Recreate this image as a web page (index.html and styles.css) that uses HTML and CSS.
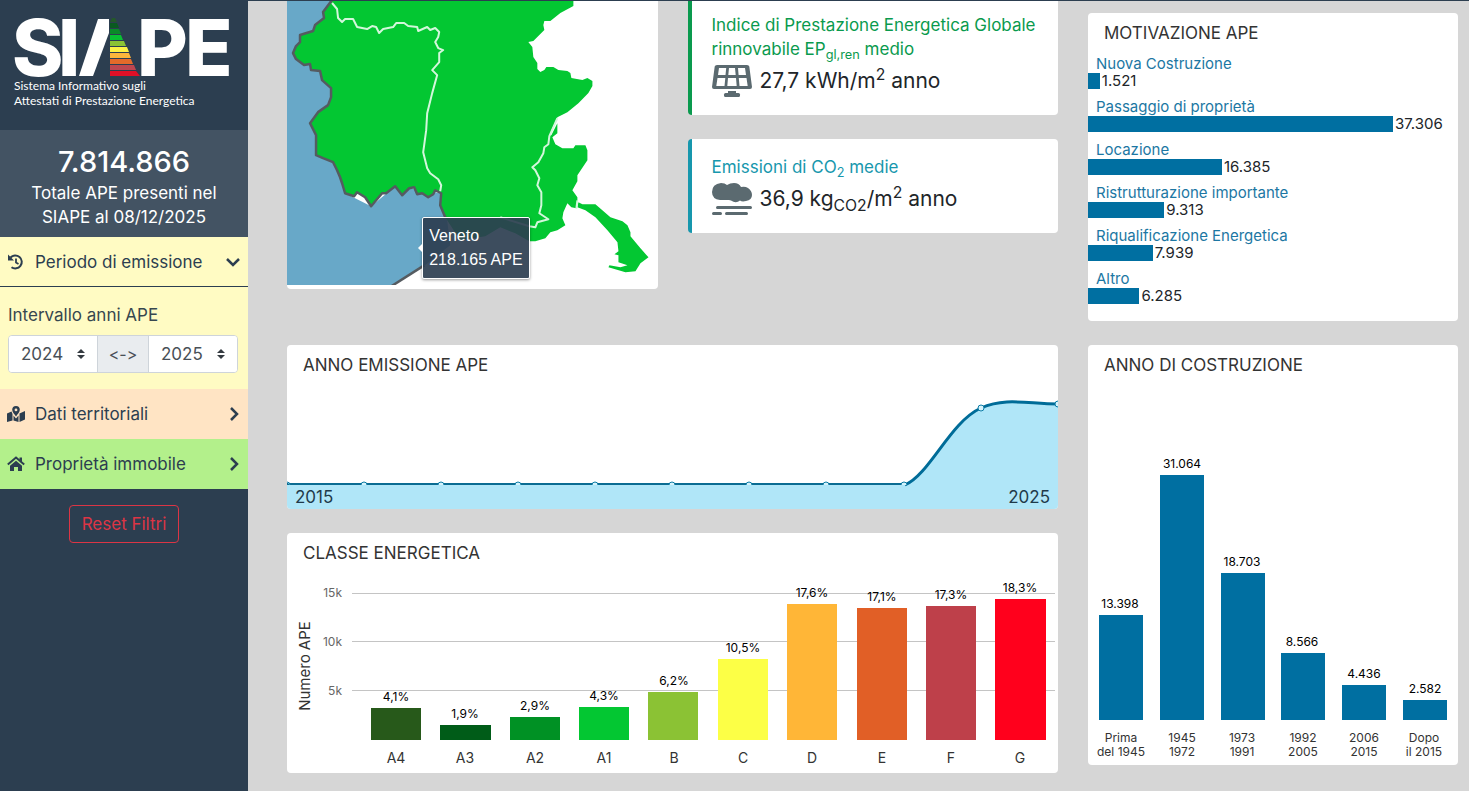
FILE: index.html
```html
<!DOCTYPE html>
<html lang="it">
<head>
<meta charset="utf-8">
<meta name="viewport" content="width=device-width, initial-scale=1">
<title>SIAPE</title>
<link rel="stylesheet" href="styles.css">
</head>
<body>
<div class="app">
  <aside class="sidebar">
    <header class="brand">
      <svg class="brand-logo" viewBox="14 16 220 62" role="img" aria-label="SIAPE">
        <g class="logo-text">
          <text x="12" y="76">S</text><text x="58" y="76">I</text>
          <text x="137" y="76">P</text><text x="185" y="76">E</text>
        </g>
        <path fill="#fff" d="M79 76 98 19h11v14L93 76z"/>
        <path fill="#24582a" d="M110 22l2-4h3l2 4z"/>
        <path fill="#0a5a20" d="M110 23h7l2 5h-9z"/>
        <path fill="#0a8a28" d="M110 29h9l2 5h-11z"/>
        <path fill="#08c032" d="M110 35h11l2 5h-13z"/>
        <path fill="#8bc234" d="M110 41h14l2 5h-16z"/>
        <path fill="#fbf046" d="M110 47h17l2 5h-19z"/>
        <path fill="#fbb63c" d="M110 53h19l2 5h-21z"/>
        <path fill="#e36a2a" d="M110 59h21l2 5h-23z"/>
        <path fill="#bd4650" d="M110 65h24l2 5h-26z"/>
        <path fill="#df1027" d="M110 71h26l4 5h-30z"/>
      </svg>
      <p class="brand-sub">Sistema Informativo sugli<br>Attestati di Prestazione Energetica</p>
    </header>
    <section class="total">
      <strong class="total-number">7.814.866</strong>
      <p class="total-text">Totale APE presenti nel<br>SIAPE al 08/12/2025</p>
    </section>
    <button class="filter filter-period" type="button" aria-expanded="true">
      <svg class="filter-icon" viewBox="0 0 18 18" fill="none" stroke="currentColor" stroke-width="2"><path d="M3.500 4.500A6.500 6.500 0 1 1 4.500 14.200"/><path d="M9 5.500v4l2.500 1.500" stroke-width="1.800"/><path d="M1 1.500v6h6z" fill="currentColor" stroke="none"/></svg>
      <span class="filter-label">Periodo di emissione</span>
      <svg class="chevron" viewBox="0 0 16 16"><path d="M2 5l6 6 6-6"/></svg>
    </button>
    <div class="period-body">
      <label class="period-label" for="year-from">Intervallo anni APE</label>
      <div class="range">
        <div class="select-box">
          <select id="year-from"><option>2024</option></select>
          <svg class="arrows" viewBox="0 0 8 10"><path d="M4 0l4 4H0zM4 10L0 6h8z"/></svg>
        </div>
        <span class="range-sep">&lt;-&gt;</span>
        <div class="select-box">
          <select aria-label="Anno finale"><option>2025</option></select>
          <svg class="arrows" viewBox="0 0 8 10"><path d="M4 0l4 4H0zM4 10L0 6h8z"/></svg>
        </div>
      </div>
    </div>
    <button class="filter filter-territory" type="button">
      <svg class="filter-icon" viewBox="0 0 18 18" fill="currentColor"><path fill-rule="evenodd" d="M9 1a3.800 3.800 0 0 1 3.800 3.800C12.800 7 10.500 9.500 9 11.500 7.500 9.500 5.200 7 5.200 4.800A3.800 3.800 0 0 1 9 1zm0 2.500a1.400 1.400 0 1 0 0 2.800 1.400 1.400 0 0 0 0-2.800z"/><path d="M0 8.500l4.500-2L5.500 9v6.500L0 17zM6.500 10.500L9 13.500l2.500-3v6.500l-5-1.500zM12.500 8.500L18 6v8.500L12.500 17z"/></svg>
      <span class="filter-label">Dati territoriali</span>
      <svg class="chevron" viewBox="0 0 16 16"><path d="M6 2l6 6-6 6"/></svg>
    </button>
    <button class="filter filter-building" type="button">
      <svg class="filter-icon" viewBox="0 0 18 18" fill="none" stroke="currentColor"><path stroke-width="2" d="M.8 9.500 9 2.500l8.200 7"/><path fill="currentColor" stroke="none" d="M12.500 2.500H15V7l-2.500-2zM9 5.800l6 5V16h-4v-4H7v4H3v-5.200z"/></svg>
      <span class="filter-label">Proprietà immobile</span>
      <svg class="chevron" viewBox="0 0 16 16"><path d="M6 2l6 6-6 6"/></svg>
    </button>
    <button class="reset" type="button">Reset Filtri</button>
  </aside>

  <main class="main">
    <div class="wide-column">
      <div class="top-row">
        <section class="card map-card" aria-label="Mappa delle regioni">
          <svg class="fluid" viewBox="287 1 370 284">
            <path fill="#68a8c8" d="M287 0H332L323 12 324 18 315 25 313 31 300 35V42L296 46 293 53 296 59 304 65 310 64 311 70 320 71 322 80 331 88V97L328 105 318 112 310 123 316 135V155L333 162 342 183 345 193 371 206 395 186 441 193 440 205 447 220 450 245 422 267 392 286H287z"/>
            <path fill="#03c732" d="M332 0 323 12 324 18 315 25 313 31 300 35V42L296 46 293 53 296 59 304 65 310 64 311 70 320 71 322 80 331 88V97L328 105 318 112 310 123 316 135V155L323 158 333 162 337 170 340 177 342 183 345 193 354 196 357 192 365 197 371 206 382 193 386 193 395 186 402 195 409 188 414 187 417 194 422 193 428 197 433 194 435 190 441 193 440 205 445 217 460 240 485 236 500 227 515 233 529 241 535 241 545 238 550 232 557 230 565 225 562 218 563 212 567 203 571 207 576 208 577 202V197L572 190 577 181V175L587 160V150L585 145 575 145 573 148 562 148 555 144 552 137 557 133V123L551 135 549 135 552 128 557 117 567 112 578 103 588 93 592 86V81L587 78 582 80 571 78 570 73 567 71 558 70 553 67H546L544 70 540 72 537 69V63L533 57 532 47 528 42 533 41 544 30 543 25 544 21H550L560 13 573 6V0z"/>
            <path fill="#03c732" d="M578 202 582 204 595 204 610 217 622 221 627 225 630 232V236L640 248 648 257 640 263 635 271 625 272 608 267 609 265 620 267 627 265 618 262V255L614 254 618 251 617 242 607 230 595 217 585 210 577 207z"/>
            <g fill="none" stroke="#555b60" stroke-width="2.500" stroke-linejoin="round">
              <path d="M332 0 323 12 324 18 315 25 313 31 300 35V42L296 46 293 53 296 59 304 65 310 64 311 70 320 71 322 80 331 88V97L328 105 318 112 310 123 316 135V155L323 158 333 162 337 170 340 177 342 183 345 193 354 196 357 192 365 197 371 206 382 193 386 193 395 186 402 195 409 188 414 187 417 194 422 193 428 197 433 194 435 190 441 193 440 205 445 217"/>
              <path d="M424 265 391 286"/>
            </g>
            <g fill="none" stroke="#d3f7db" stroke-width="2" stroke-linejoin="round">
              <path d="M332 3 337 9 338 18 342 22 345 19H353L357 27 367 29 372 26 376 27 379 33 383 29 393 27 396 23H404L408 26 417 27 418 31 427 27 430 30 435 28 439 32 438 37 435 42 438 48 443 50 439 53V62L432 70 437 75 432 93 427 113 426 130 424 145 423 152 427 168 430 173 438 179 441 185 440 191"/>
              <path d="M557 118 549 136 548 144 544 147 543 153 538 162 532 167 535 170 539 178 537 185 541 192V205L539 213 548 219 537 222 535 227 529 226 500 217"/>
              <path d="M577 200 576 208"/>
            </g>
          </svg>
          <div class="map-tip" role="tooltip">Veneto<br>218.165 APE</div>
        </section>
        <div class="stats">
          <section class="card stat stat-green stat-first">
            <h2 class="stat-title">Indice di Prestazione Energetica Globale rinnovabile EP<sub>gl,ren</sub> medio</h2>
            <p class="stat-value">
              <svg class="stat-icon" viewBox="0 0 40 32" fill="#5b6a70"><path fill-rule="evenodd" d="M5 0h30q2 0 2.300 1.500L40 22q0 2-2 2H2q-2 0-2-2L2.700 1.500Q3 0 5 0zM7 3l-1 7h7.500l.7-7zM17 3l-.7 7h7.400L23 3zM26 3l.6 7H34l-1-7zM5.500 13l-1.200 8h8.200l.8-8zM16 13l-.7 8h9.400l-.7-8zM26.800 13l.7 8h8.200l-1.200-8z"/><rect x="16" y="26" width="8" height="4"/><rect x="12" y="28" width="16" height="4" rx="1.500"/></svg>
              <span>27,7 kWh/m<sup>2</sup> anno</span>
            </p>
          </section>
          <section class="card stat stat-teal">
            <h2 class="stat-title">Emissioni di CO<sub>2</sub> medie</h2>
            <p class="stat-value">
              <svg class="stat-icon" viewBox="0 0 40 32" fill="#5b6a70"><path d="M9 0q4 0 6 2 3-2 7-2 5 0 7 4 4-1 7 1 4 3 4 7 0 5-6 6-4 1-6-.5-4 3.500-9 0l-2-.5H8q-8-1-8-8Q0 1 9 0z"/><g stroke="#5b6a70" stroke-width="3" stroke-linecap="round"><path d="M5.500 24.500h33M1.500 30.500h7M14.500 30.500h20"/></g></svg>
              <span>36,9 kg<sub>CO2</sub>/m<sup>2</sup> anno</span>
            </p>
          </section>
        </div>
      </div>

      <section class="card">
        <h2 class="card-title">ANNO EMISSIONE APE</h2>
        <svg class="fluid" viewBox="287 385 771 124" role="img" aria-label="Anno emissione APE">
          <path fill="#b0e6f8" d="M287 485H904C930 474 950 422 981 408 1006 397 1028 404 1058 404V509H287z"/>
          <path fill="none" stroke="#0b6c92" stroke-width="2" d="M287 484H906"/>
          <path fill="none" stroke="#006c98" stroke-width="3" d="M905 485C930 474 950 422 981 408 1006 397 1028 404 1058 404"/>
          <g fill="#d5f2fb" stroke="#0b7ca6" stroke-width="1">
            <path d="M287 482a3 3 0 0 1 3 3M361 485a3 3 0 0 1 6 0M438 485a3 3 0 0 1 6 0M515 485a3 3 0 0 1 6 0M592 485a3 3 0 0 1 6 0M669 485a3 3 0 0 1 6 0M746 485a3 3 0 0 1 6 0M823 485a3 3 0 0 1 6 0M901 485a3 3 0 0 1 6 0"/>
            <circle cx="981" cy="408" r="3"/><circle cx="1058" cy="404" r="3"/>
          </g>
          <g class="year-text"><text x="295" y="503">2015</text><text x="1050" y="503" text-anchor="end">2025</text></g>
        </svg>
      </section>

      <section class="card">
        <h2 class="card-title">CLASSE ENERGETICA</h2>
        <svg class="fluid" viewBox="287 573 771 200" role="img" aria-label="Classe energetica">
          <path stroke="#c4c4c4" d="M352 593.500H1055M352 641.500H1055M352 690.500H1055"/>
          <g class="tick" text-anchor="end"><text x="342" y="597">15k</text><text x="342" y="646">10k</text><text x="342" y="695">5k</text></g>
          <text class="axis-name" text-anchor="middle" transform="translate(310 666) rotate(-90)">Numero APE</text>
          <rect x="371" y="708" width="50" height="32" fill="#27591a"/>
          <rect x="440" y="725" width="51" height="15" fill="#005c18"/>
          <rect x="510" y="717" width="50" height="23" fill="#009124"/>
          <rect x="579" y="707" width="50" height="33" fill="#03c732"/>
          <rect x="648" y="692" width="50" height="48" fill="#8bc234"/>
          <rect x="718" y="659" width="50" height="81" fill="#fcff46"/>
          <rect x="787" y="604" width="50" height="136" fill="#ffb637"/>
          <rect x="857" y="608" width="50" height="132" fill="#e15f26"/>
          <rect x="926" y="606" width="50" height="134" fill="#be404a"/>
          <rect x="995" y="599" width="51" height="141" fill="#ff001c"/>
          <g class="value" text-anchor="middle">
            <text x="396" y="701">4,1%</text><text x="465" y="718">1,9%</text><text x="535" y="710">2,9%</text><text x="604" y="700">4,3%</text><text x="674" y="685">6,2%</text><text x="743" y="652">10,5%</text><text x="812" y="597">17,6%</text><text x="882" y="601">17,1%</text><text x="951" y="599">17,3%</text><text x="1020" y="592">18,3%</text>
          </g>
          <g class="class-name" text-anchor="middle">
            <text x="396" y="763">A4</text><text x="465" y="763">A3</text><text x="535" y="763">A2</text><text x="604" y="763">A1</text><text x="674" y="763">B</text><text x="743" y="763">C</text><text x="812" y="763">D</text><text x="882" y="763">E</text><text x="951" y="763">F</text><text x="1020" y="763">G</text>
          </g>
        </svg>
      </section>
    </div>

    <div class="side-column">
      <section class="card reasons">
        <h2 class="card-title">MOTIVAZIONE APE</h2>
        <dl class="bars">
          <div class="bar-item"><dt>Nuova Costruzione</dt><dd><span class="bar" style="width:3.200%"></span>1.521</dd></div>
          <div class="bar-item"><dt>Passaggio di proprietà</dt><dd><span class="bar" style="width:82.400%"></span>37.306</dd></div>
          <div class="bar-item"><dt>Locazione</dt><dd><span class="bar" style="width:36.200%"></span>16.385</dd></div>
          <div class="bar-item"><dt>Ristrutturazione importante</dt><dd><span class="bar" style="width:20.600%"></span>9.313</dd></div>
          <div class="bar-item"><dt>Riqualificazione Energetica</dt><dd><span class="bar" style="width:17.500%"></span>7.939</dd></div>
          <div class="bar-item"><dt>Altro</dt><dd><span class="bar" style="width:13.900%"></span>6.285</dd></div>
        </dl>
      </section>
      <section class="card">
        <h2 class="card-title">ANNO DI COSTRUZIONE</h2>
        <svg class="fluid" viewBox="1088 385 370 380" role="img" aria-label="Anno di costruzione">
          <g fill="#006fa1">
            <rect x="1099" y="615" width="44" height="105"/><rect x="1160" y="475" width="44" height="245"/><rect x="1221" y="573" width="44" height="147"/><rect x="1281" y="653" width="44" height="67"/><rect x="1342" y="685" width="44" height="35"/><rect x="1403" y="700" width="44" height="20"/>
          </g>
          <g class="value" text-anchor="middle">
            <text x="1120" y="608">13.398</text><text x="1182" y="468">31.064</text><text x="1242" y="566">18.703</text><text x="1302" y="646">8.566</text><text x="1364" y="678">4.436</text><text x="1425" y="693">2.582</text>
          </g>
          <g class="period-name" text-anchor="middle">
            <text x="1121" y="742">Prima</text><text x="1121" y="756">del 1945</text>
            <text x="1182" y="742">1945</text><text x="1182" y="756">1972</text>
            <text x="1242" y="742">1973</text><text x="1242" y="756">1991</text>
            <text x="1303" y="742">1992</text><text x="1303" y="756">2005</text>
            <text x="1364" y="742">2006</text><text x="1364" y="756">2015</text>
            <text x="1424" y="742">Dopo</text><text x="1424" y="756">il 2015</text>
          </g>
        </svg>
      </section>
    </div>
  </main>
</div>
</body>
</html>
```

FILE: styles.css
```css
*, *::before { box-sizing: border-box; }
body {
  margin: 0;
  background: #d6d6d6;
  color: #212529;
  font-family: Inter, "Open Sans", sans-serif;
  font-size: 17px;
  line-height: 24px;
}
h2, p, dl, dd { margin: 0; font-weight: 400; }
button, select { font: inherit; }
sub, sup { font-size: 75%; line-height: 0; }
.fluid { display: block; width: 100%; }

.app { display: flex; min-height: 100vh; border-top: 1px solid #2c3e50; }

/* Sidebar */
.sidebar {
  flex: none;
  width: 248px;
  display: flex;
  flex-direction: column;
  background: #2c3e50;
  color: #fff;
}
.brand { padding: 15px 14px 22px; }
.brand-logo { display: block; width: 220px; overflow: visible; }
.logo-text { fill: #fff; font-size: 78px; font-weight: 800; }
.brand-sub { font-family: Lato, sans-serif; font-size: 12px; line-height: 15px; }
.total { padding: 12px 8px 8px; background: #435363; text-align: center; }
.total-number { display: block; font-size: 29px; font-weight: 500; line-height: 39px; }
.filter {
  display: flex;
  align-items: center;
  gap: 10px;
  height: 50px;
  padding: 0 7px;
  border: 0;
  color: #2c3e50;
  text-align: left;
}
.filter-period { background: #fffbc3; border-bottom: 1px solid #2c3e50; }
.filter-territory { background: #ffe4c4; }
.filter-building { background: #b3f08b; }
.filter-icon { flex: none; width: 18px; height: 18px; }
.filter-label { flex: 1; }
.chevron { width: 16px; height: 16px; fill: none; stroke: currentColor; stroke-width: 2.5; }
.period-body { padding: 16px 10px 16px 8px; background: #fffbc3; color: #37474f; }
.period-label { display: block; margin-bottom: 8px; }
.range {
  display: flex;
  height: 38px;
  border: 1px solid #ced4da;
  border-radius: 4px;
  background: #fff;
  overflow: hidden;
}
.select-box { position: relative; flex: 1; display: flex; }
.select-box select {
  flex: 1;
  width: 100%;
  padding: 0 12px;
  border: 0;
  background: #fff;
  color: #495057;
  appearance: none;
}
.arrows { position: absolute; right: 12px; top: 13px; width: 8px; height: 10px; fill: #343a40; pointer-events: none; }
.range-sep {
  flex: none;
  width: 52px;
  border: solid #ced4da;
  border-width: 0 1px;
  background: #e9ecef;
  color: #495057;
  font-size: 16px;
  font-feature-settings: "calt" 0;
  line-height: 36px;
  text-align: center;
}
.reset {
  align-self: center;
  height: 38px;
  margin-top: 16px;
  padding: 0 12px;
  border: 1px solid #dc3545;
  border-radius: 4px;
  background: none;
  color: #dc3545;
}

/* Dashboard */
.main {
  flex: 1;
  display: grid;
  grid-template-columns: minmax(0, 771fr) minmax(0, 370fr);
  column-gap: 30px;
  align-items: start;
  padding: 0 11px 0 39px;
}
.wide-column, .side-column, .stats { display: flex; flex-direction: column; gap: 24px; }
.side-column { padding-top: 12px; }
.top-row {
  display: grid;
  grid-template-columns: 1fr 1fr;
  gap: 30px;
  align-items: start;
  margin-bottom: 32px;
}
.card { border-radius: 4px; background: #fff; overflow: hidden; }
.card-title { padding: 8px 16px; font-size: 17px; line-height: 24px; color: #333; }
.map-card { position: relative; padding-bottom: 4px; border-radius: 0 0 4px 4px; }
.map-tip {
  position: absolute;
  left: 36.5%;
  top: 75%;
  padding: 6px;
  border: 1px solid #fff;
  border-radius: 2px;
  background: rgba(44, 62, 80, 0.92);
  box-shadow: 0 1px 3px rgba(0, 0, 0, 0.4);
  color: #fff;
  font-family: "Liberation Sans", sans-serif;
  font-size: 16px;
  white-space: nowrap;
}
.map-tip::before {
  content: "";
  position: absolute;
  left: -5px;
  top: 26px;
  border: solid transparent;
  border-width: 4px 4px 4px 0;
  border-right-color: #fff;
}
.stat { padding: 16px 20px; border-left: 4px solid; }
.stat-first { padding-top: 12px; border-radius: 0 0 4px 4px; }
.stat-green { border-left-color: #0a9a4e; }
.stat-green .stat-title { color: #0a9a4e; }
.stat-teal { border-left-color: #1797ad; }
.stat-teal .stat-title { color: #1797ad; }
.stat-title { font-size: 17px; line-height: 24px; }
.stat-value { display: flex; align-items: center; gap: 8px; height: 38px; padding-top: 2px; font-size: 21px; }
.stat-icon { flex: none; width: 40px; height: 32px; }

.reasons { padding-bottom: 17px; }
.bars { display: grid; gap: 7px; }
.bar-item dt { padding: 2px 0 0 8px; color: #1c77a3; font-size: 15px; line-height: 18px; }
.bar-item dd { display: flex; gap: 2px; height: 16px; font-size: 15px; line-height: 16px; }
.bar { flex: none; background: #006fa1; }

/* Chart lettering */
.year-text { fill: #1f3a4a; font-size: 17px; }
.tick { fill: #666; font-size: 12px; }
.value { fill: #000; font-size: 12px; }
.axis-name { fill: #333; font-size: 15px; }
.class-name { fill: #333; font-size: 14px; }
.period-name { fill: #333; font-size: 12px; }
```
